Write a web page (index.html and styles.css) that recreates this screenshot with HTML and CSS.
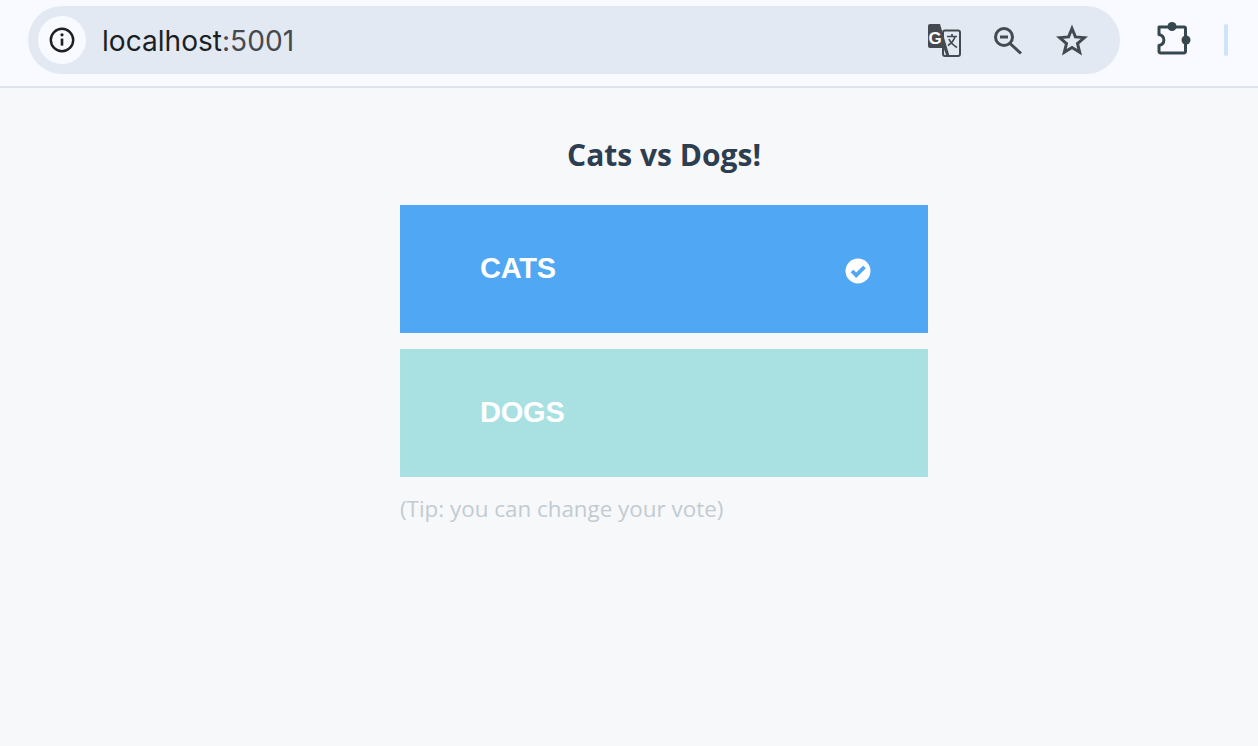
FILE: index.html
```html
<!DOCTYPE html>
<html lang="en">
<head>
  <meta charset="UTF-8">
  <title>Cats vs Dogs!</title>
  <link rel="stylesheet" href="styles.css">
</head>
<body>
  <header class="toolbar">
    <div class="omnibox">
      <div class="site-info">
        <svg width="28" height="28" viewBox="0 0 28 28" fill="none" stroke="#1b1f24" stroke-width="2.4">
          <circle cx="14" cy="14" r="11.2"/>
          <path d="M14 12.6v7" stroke-width="2.6"/>
          <circle cx="14" cy="8.8" r="1.6" fill="#1b1f24" stroke="none"/>
        </svg>
      </div>
      <div class="url">localhost<span class="port">:5001</span></div>
      <div class="omni-icons">
        <svg width="36" height="36" viewBox="0 0 36 36">
          <rect x="17" y="8.500" width="17" height="25.500" rx="2" fill="#e3e9f2" stroke="#454a50" stroke-width="2"/>
          <path d="M2 4a2 2 0 0 1 2-2h10l9.500 32h-3l-3-8H4a2 2 0 0 1-2-2z" fill="#454a50"/>
          <text class="translate-g" x="9" y="21.500">G</text>
          <path d="M21 14.500h10M26 12v2.500M29 14.500c-1 4-4 7-7 9M23 17c1.500 3.500 4 6 8 8.500" fill="none" stroke="#454a50" stroke-width="1.700"/>
        </svg>
        <svg width="30" height="30" viewBox="0 0 30 30" fill="none" stroke="#454a50" stroke-width="3">
          <circle cx="12" cy="12" r="8.500"/>
          <path d="M18 18.500L29 28.500"/>
          <path d="M8 12h8"/>
        </svg>
        <svg class="star" width="32" height="32" viewBox="0 0 32 32" fill="none" stroke="#454a50" stroke-width="3">
          <path d="M16 4.500l3.400 8.400 9 .7-6.900 5.900 2.200 8.800-7.700-4.800-7.700 4.800 2.200-8.800-6.900-5.900 9-.7z"/>
        </svg>
      </div>
    </div>
    <svg class="ext-icon" width="36" height="36" viewBox="0 0 36 36">
      <path d="M4 5h25a1.500 1.500 0 0 1 1.500 1.500v23a1.500 1.500 0 0 1-1.500 1.500H5.500A1.500 1.500 0 0 1 4 29.500v-6c6.500-1.500 6.500-9.500 0-11z" fill="none" stroke="#37474f" stroke-width="3" stroke-linejoin="round"/>
      <circle cx="17" cy="4.500" r="4.500" fill="#37474f"/>
      <circle cx="31" cy="18" r="4.500" fill="#37474f"/>
    </svg>
    <div class="profile-line"></div>
  </header>

  <main class="vote">
    <h3 class="title">Cats vs Dogs!</h3>
    <button class="choice choice-a">
      CATS
      <svg class="check" width="26" height="26" viewBox="0 0 26 26">
        <circle cx="13" cy="13" r="12.500" fill="#fff"/>
        <path d="M7 13l4.200 4.200L19.500 9" fill="none" stroke="#50a7f3" stroke-width="3.800"/>
      </svg>
    </button>
    <button class="choice choice-b">DOGS</button>
    <p class="tip">(Tip: you can change your vote)</p>
  </main>
</body>
</html>
```

FILE: styles.css
```css
body {
  margin: 0;
  height: 746px;
  overflow: hidden;
  background-color: #f7f8fa;
  font-family: "Open Sans", sans-serif;
}
.toolbar {
  display: flex;
  align-items: center;
  height: 88px;
  padding: 0 29px 6px 28px;
  box-sizing: border-box;
  background-color: #f8faff;
  border-bottom: 2px solid #dde3ea;
}
.omnibox {
  display: flex;
  align-items: center;
  width: 1092px;
  height: 68px;
  padding: 0 32px 0 10px;
  box-sizing: border-box;
  background-color: #e3e9f2;
  border-radius: 34px;
}
.site-info {
  display: flex;
  align-items: center;
  justify-content: center;
  width: 48px;
  height: 48px;
  border-radius: 50%;
  background-color: #f8faff;
}
.url {
  flex: 1;
  margin: 1px 0 0 16px;
  font-family: Inter, sans-serif;
  font-size: 28.1px;
  color: #1b1f24;
}
.port {
  color: #464a4f;
}
.omni-icons {
  display: flex;
  align-items: center;
  gap: 30px;
}
.star {
  margin-left: 4px;
}
.translate-g {
  font-family: "Liberation Sans", sans-serif;
  font-size: 17px;
  font-weight: 700;
  text-anchor: middle;
  fill: #fff;
}
.ext-icon {
  margin-left: 35px;
}
.profile-line {
  width: 4px;
  height: 32px;
  margin-left: 33px;
  border-radius: 2px;
  background-color: #cde4fb;
}
.vote {
  width: 528px;
  margin-left: 400px;
}
.title {
  margin: 47px 0 30px;
  font-size: 30px;
  line-height: 40px;
  font-weight: 700;
  text-align: center;
  color: #2c3e50;
}
.choice {
  display: flex;
  align-items: center;
  justify-content: space-between;
  width: 100%;
  height: 128px;
  margin-bottom: 16px;
  padding: 0 57px 2px 80px;
  border: none;
  font-family: "Liberation Sans", sans-serif;
  font-size: 29px;
  font-weight: 700;
  letter-spacing: -0.2px;
  color: #fff;
}
.choice-a {
  background-color: #50a7f3;
}
.choice-b {
  background-color: #a9e1e2;
}
.check {
  margin-top: 6px;
}
.tip {
  margin: 15px 0 0;
  font-size: 22.4px;
  line-height: 32px;
  color: #c2cbd2;
}
```
